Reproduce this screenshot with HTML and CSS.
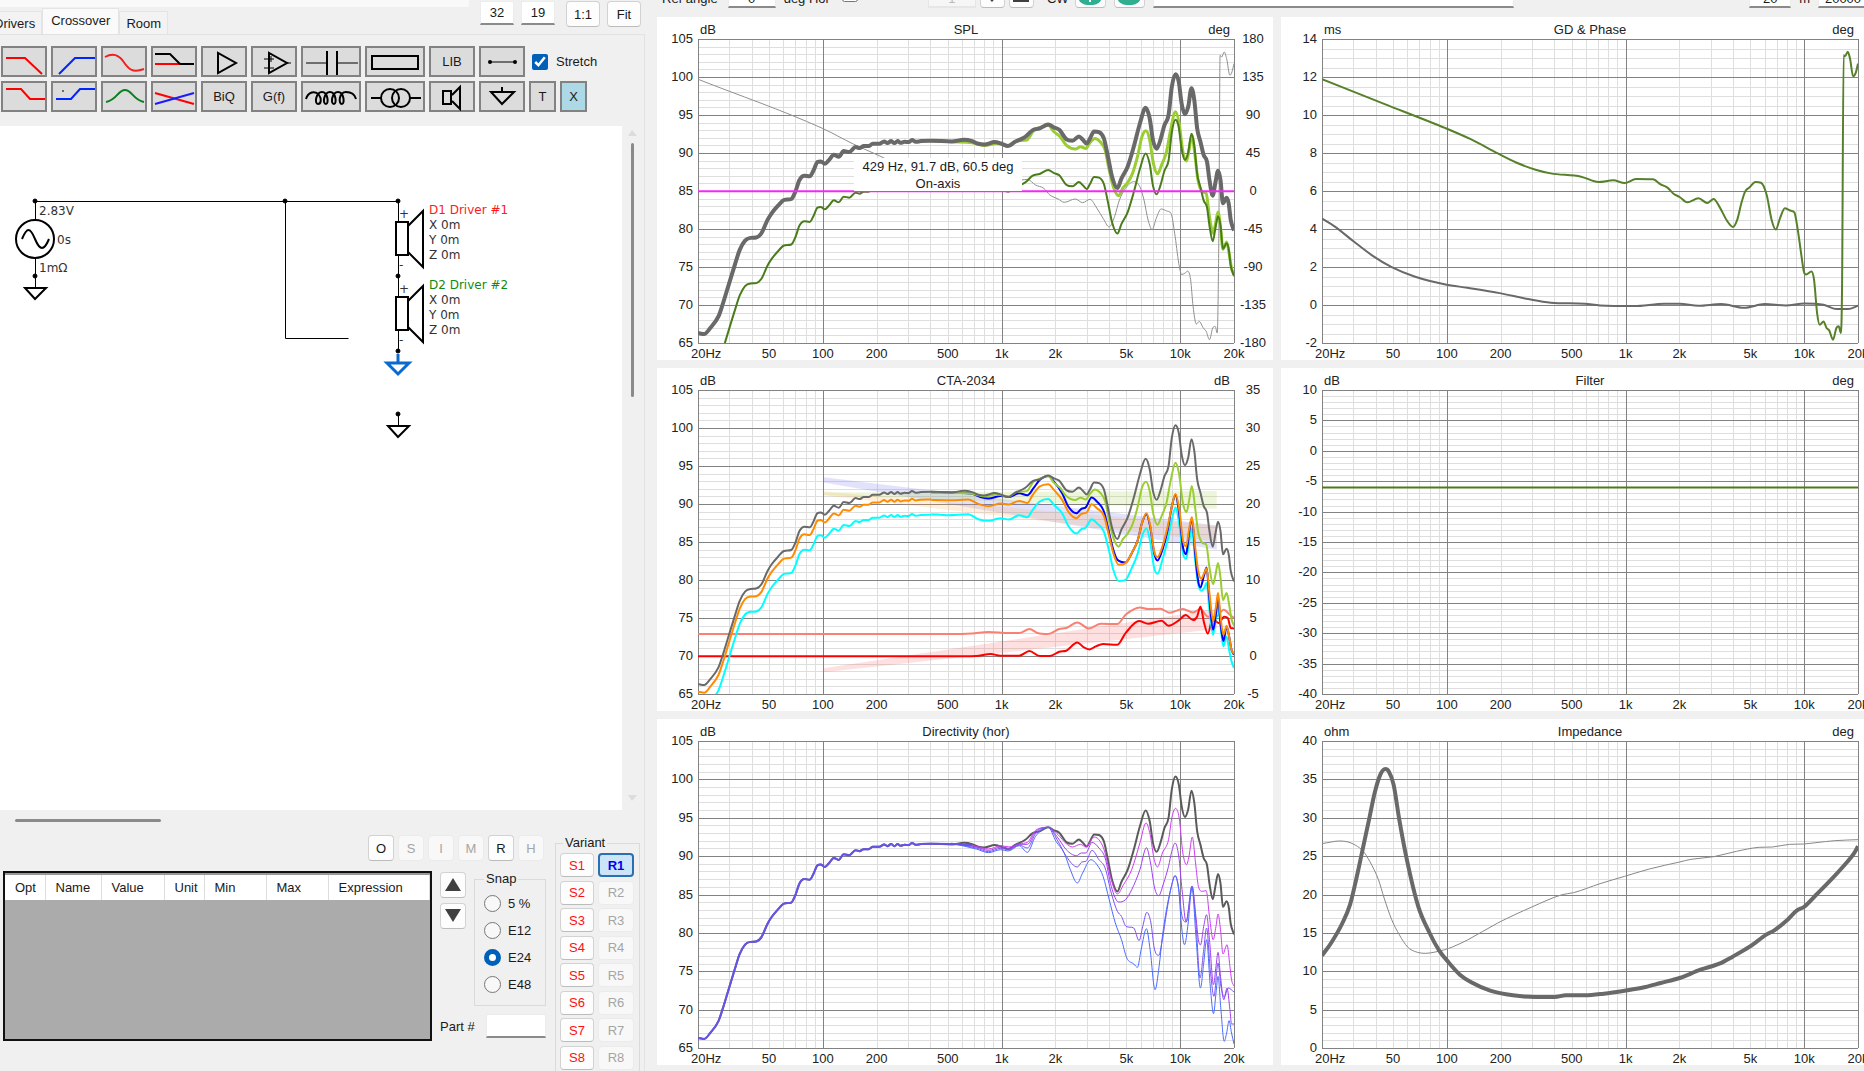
FILE: index.html
```html
<!DOCTYPE html>
<html lang="en">
<head>
  <meta charset="UTF-8">
  <title>Crossover</title>
  <link rel="stylesheet" href="styles.css">
</head>
<body>

  <section class="editor">
    <header class="tabbar">
      <nav class="tabs">
        <a href="#drivers">Drivers</a>
        <a href="#crossover" class="active">Crossover</a>
        <a href="#room">Room</a>
      </nav>
      <div class="size">
        <input type="text" value="32" aria-label="Columns">
        <input type="text" value="19" aria-label="Rows">
        <button class="btn">1:1</button>
        <button class="btn">Fit</button>
      </div>
    </header>

    <div class="tabpage">
      <div class="parts">
        <div class="parts-row">
          <button class="part" aria-label="Low pass"><svg width="42" height="28"><path d="M3 10H22L39 26" stroke="#f00" stroke-width="2"/></svg></button>
          <button class="part" aria-label="High pass"><svg width="42" height="28"><path d="M6 26L22 10H42" stroke="#0026ff" stroke-width="2"/></svg></button>
          <button class="part" aria-label="Shelf"><svg width="42" height="28"><path d="M2 9C9 5 15 6 20 13C26 22 30 25 41 21" stroke="#f02020" stroke-width="2"/></svg></button>
          <button class="part" aria-label="Delay"><svg width="42" height="28"><path d="M2 16H26" stroke="#f00" stroke-width="2"/><path d="M2 6H17L27 16H41" stroke="#000" stroke-width="2"/></svg></button>
          <button class="part" aria-label="Buffer"><svg width="42" height="28"><path d="M15 5V25L33 15Z" stroke="#000" stroke-width="2"/></svg></button>
          <button class="part" aria-label="Op amp"><svg width="42" height="28"><path d="M16 5V25L34 15Z" stroke="#000" stroke-width="2"/><path d="M34 15H38M11 11H21M18 8V14M11 20H21" stroke="#000"/></svg></button>
          <button class="part wide" aria-label="Capacitor"><svg width="56" height="28"><path d="M3 15H24M35 15H55" stroke="#000"/><path d="M24 3V27M34 3V27" stroke="#000" stroke-width="2"/></svg></button>
          <button class="part wide" aria-label="Resistor"><svg width="56" height="28"><rect x="5" y="8" width="46" height="13" stroke="#000" stroke-width="2"/></svg></button>
          <button class="part">LIB</button>
          <button class="part" aria-label="Wire"><svg width="42" height="28"><path d="M8 14H34" stroke="#000"/><circle cx="9" cy="14" r="2" fill="#000"/><circle cx="34" cy="14" r="2" fill="#000"/></svg></button>
          <label class="stretch"><input type="checkbox" checked> Stretch</label>
        </div>
        <div class="parts-row">
          <button class="part" aria-label="Low shelf"><svg width="42" height="28"><path d="M3 6H18L27 16H42" stroke="#f00" stroke-width="2"/></svg></button>
          <button class="part" aria-label="High shelf"><svg width="42" height="28"><path d="M3 16H18L27 6H42" stroke="#0026ff" stroke-width="2"/><circle cx="10" cy="8" r="1" fill="#444"/></svg></button>
          <button class="part" aria-label="Peak"><svg width="42" height="28"><path d="M3 19C14 17 15 7 22 7S30 17 41 19" stroke="#0a7f1e" stroke-width="2"/></svg></button>
          <button class="part" aria-label="All pass"><svg width="42" height="28"><path d="M2 10L41 21" stroke="#f00" stroke-width="2"/><path d="M2 21L41 10" stroke="#1a1aff" stroke-width="2"/></svg></button>
          <button class="part">BiQ</button>
          <button class="part">G(f)</button>
          <button class="part wide" aria-label="Inductor"><svg width="56" height="28"><path d="M3 16C5 9 12 7 16 12C19 16 18 21 15 21C11 21 13 9 19 9C25 9 26 21 23 21C19 21 21 9 27 9C33 9 34 21 31 21C27 21 29 9 35 9C41 9 42 21 39 21C35 21 36 9 43 9C49 9 52 12 53 16" stroke="#000" stroke-width="2"/></svg></button>
          <button class="part wide" aria-label="Transformer"><svg width="56" height="28"><circle cx="23" cy="15" r="9" stroke="#000" stroke-width="2"/><circle cx="34" cy="15" r="9" stroke="#000" stroke-width="2"/><path d="M4 15H14M43 15H54" stroke="#000" stroke-width="2"/></svg></button>
          <button class="part" aria-label="Driver"><svg width="42" height="28"><path d="M12 8H20V21H12ZM21 12L29 4V26L21 18" stroke="#000" stroke-width="2"/></svg></button>
          <button class="part" aria-label="Ground"><svg width="42" height="28"><path d="M21 4V9M10 9H33L21 21Z" stroke="#000" stroke-width="2"/></svg></button>
          <button class="part small">T</button>
          <button class="part small on">X</button>
        </div>
      </div>

      <div class="canvas-area">
        <svg class="schematic" width="600" height="480" viewBox="0 0 600 480">
          <g class="wire">
            <path d="M35.500 75.500H398.500V96M285.500 75.500V212.500H348.500M35.500 75V93M35.500 132V162M398.500 129V171M398.500 204V226M398.500 288V300"/>
          </g>
          <g class="dots">
            <circle cx="35" cy="75" r="2"/><circle cx="285" cy="75" r="2"/><circle cx="398" cy="75" r="2"/>
            <circle cx="35" cy="150" r="2"/><circle cx="398" cy="150" r="2"/><circle cx="398" cy="225" r="2"/><circle cx="398" cy="288" r="2"/>
          </g>
          <g class="symbol">
            <circle cx="35" cy="113" r="19"/>
            <path d="M22 113C27 101 30 101 35 113S44 125 49 113"/>
            <path d="M25 162H46L35 173Z"/>
            <path d="M396 96H408V129H396ZM408 100L423 85V141L408 126"/>
            <path d="M396 171H408V204H396ZM408 175L423 160V216L408 201"/>
            <path d="M388 300H409L398 311Z"/>
          </g>
          <path class="selected" d="M398 228V237M387 237H409L398 248Z"/>
          <text x="39" y="89">2.83V</text>
          <text x="57" y="118">0s</text>
          <text x="39" y="146">1mΩ</text>
          <text x="399" y="92">+</text>
          <text x="399" y="143">-</text>
          <text x="399" y="167">+</text>
          <text x="399" y="218">-</text>
          <text x="429" y="88" class="d1">D1 Driver #1</text>
          <text x="429" y="103">X 0m</text>
          <text x="429" y="118">Y 0m</text>
          <text x="429" y="133">Z 0m</text>
          <text x="429" y="163" class="d2">D2 Driver #2</text>
          <text x="429" y="178">X 0m</text>
          <text x="429" y="193">Y 0m</text>
          <text x="429" y="208">Z 0m</text>
        </svg>
        <div class="vscroll">
          <svg width="9" height="6"><path d="M4 0L9 6H0Z"/></svg>
          <div class="vthumb"></div>
          <svg width="9" height="6"><path d="M4 6L9 0H0Z"/></svg>
        </div>
      </div>
      <div class="hscroll"></div>

      <div class="bottom">
        <div class="params">
          <div class="opt-buttons">
            <button class="btn">O</button>
            <button class="btn" disabled>S</button>
            <button class="btn" disabled>I</button>
            <button class="btn" disabled>M</button>
            <button class="btn">R</button>
            <button class="btn" disabled>H</button>
          </div>
          <div class="params-body">
            <div class="grid-box">
              <table>
                <colgroup><col class="c-opt"><col class="c-name"><col class="c-value"><col class="c-unit"><col class="c-min"><col class="c-max"><col></colgroup>
                <thead>
                  <tr><th>Opt</th><th>Name</th><th>Value</th><th>Unit</th><th>Min</th><th>Max</th><th>Expression</th></tr>
                </thead>
              </table>
            </div>
            <div class="tools">
              <div class="tools-top">
                <div class="updown">
                  <button class="btn" aria-label="Up"><svg width="16" height="14"><path d="M8 0L16 13H0Z" fill="#404040"/></svg></button>
                  <button class="btn" aria-label="Down"><svg width="16" height="14"><path d="M0 0H16L8 13Z" fill="#404040"/></svg></button>
                </div>
                <fieldset class="snap">
                  <legend>Snap</legend>
                  <label><input type="radio" name="snap"> 5 %</label>
                  <label><input type="radio" name="snap"> E12</label>
                  <label><input type="radio" name="snap" checked> E24</label>
                  <label><input type="radio" name="snap"> E48</label>
                </fieldset>
              </div>
              <label class="partno">Part # <input type="text"></label>
            </div>
          </div>
        </div>
        <fieldset class="variant">
          <legend>Variant</legend>
          <div class="variants">
            <button class="btn save">S1</button><button class="btn current">R1</button>
            <button class="btn save">S2</button><button class="btn" disabled>R2</button>
            <button class="btn save">S3</button><button class="btn" disabled>R3</button>
            <button class="btn save">S4</button><button class="btn" disabled>R4</button>
            <button class="btn save">S5</button><button class="btn" disabled>R5</button>
            <button class="btn save">S6</button><button class="btn" disabled>R6</button>
            <button class="btn save">S7</button><button class="btn" disabled>R7</button>
            <button class="btn save">S8</button><button class="btn" disabled>R8</button>
          </div>
        </fieldset>
      </div>
    </div>
  </section>

  <section class="results">
    <div class="options">
      <label class="angle">Ref angle <input type="text" value="0"></label>
      <label class="hor">deg Hor <input type="checkbox"></label>
      <div class="spin">
        <input type="text" value="1" aria-label="Curve" disabled>
        <button class="btn" aria-label="Next"><svg width="16" height="14"><path d="M8 14L0 5H4V0H12V5H16Z" fill="#404040"/></svg></button>
        <button class="btn" aria-label="Previous"><svg width="16" height="14"><path d="M8 0L16 9V14H0V9Z" fill="#404040"/></svg></button>
      </div>
      <span class="cw">CW</span>
      <button class="btn round" aria-label="Add"><svg width="24" height="20"><rect width="24" height="20" rx="9" fill="#2fae90"/><path d="M12 6V17" stroke="#fff" stroke-width="2"/></svg></button>
      <button class="btn round" aria-label="Remove"><svg width="24" height="20"><rect width="24" height="20" rx="9" fill="#2fae90"/></svg></button>
      <input type="text" class="title" aria-label="Title">
      <div class="range">
        <input type="text" value="20" aria-label="Minimum frequency">
        <span>m</span>
        <input type="text" class="fmax" value="20000" aria-label="Maximum frequency">
      </div>
    </div>
    <div class="charts">
      <div class="chart" id="spl"><div class="tip">429 Hz, 91.7 dB, 60.5 deg<br>On-axis</div></div>
      <div class="chart" id="gd"></div>
      <div class="chart" id="cta"></div>
      <div class="chart" id="filter"></div>
      <div class="chart" id="directivity"></div>
      <div class="chart" id="impedance"></div>
    </div>
  </section>

  <script src="charts.js"></script>
</body>
</html>
```
FILE: styles.css
```css
* {
  box-sizing: border-box;
}
body {
  margin: 0;
  display: flex;
  height: 100vh;
  overflow: hidden;
  background: #f0f0f0;
  color: #1a1a1a;
  font-family: "Liberation Sans", Arial, sans-serif;
  font-size: 13px;
}
button, input {
  font: inherit;
  color: inherit;
}
svg {
  display: block;
  fill: none;
}
input[type="text"] {
  height: 24px;
  border: 1px solid #ececec;
  border-bottom: 2px solid #8a8a8a;
  background: #fff;
  text-align: center;
  padding: 0;
}
.btn {
  height: 26px;
  padding: 0;
  border: 1px solid #d2d2d2;
  border-bottom-color: #bcbcbc;
  border-radius: 4px;
  background: #fdfdfd;
  display: flex;
  align-items: center;
  justify-content: center;
}
.btn:disabled {
  color: #a5a5a5;
  border-color: #ebebeb;
  background: #f8f8f8;
}

/* left side */
.editor {
  width: 645px;
  margin-right: 12px;
  flex: none;
  display: flex;
  flex-direction: column;
}
.tabbar {
  display: flex;
  justify-content: space-between;
  height: 34px;
  padding-right: 4px;
}
.tabs {
  display: flex;
  align-items: flex-end;
  margin-left: -13px;
  flex: 1;
  max-width: 482px;
  height: 34px;
  border-top: 7px solid #f9f9f9;
}
.tabs a {
  color: inherit;
  text-decoration: none;
  height: 23px;
  line-height: 23px;
  padding: 0 6px;
  background: #f3f3f3;
  border: 1px solid #e4e4e4;
  border-bottom: 0;
}
.tabs .active {
  height: 26px;
  background: #fafafa;
  padding: 0 8px;
}
.size {
  display: flex;
  gap: 7px;
  padding-top: 1px;
}
.size input {
  width: 34px;
}
.size .btn {
  width: 34px;
}
.size .btn:nth-of-type(1) {
  margin-left: 4px;
}
.tabpage {
  flex: 1;
  min-height: 0;
  display: flex;
  flex-direction: column;
  border-top: 1px solid #e2e2e2;
  border-right: 1px solid #e2e2e2;
}
.parts {
  display: flex;
  flex-direction: column;
  gap: 4px;
  padding: 11px 0 14px 1px;
}
.parts-row {
  display: flex;
  gap: 4px;
}
.part {
  width: 46px;
  height: 31px;
  padding: 0;
  border: 2px solid #828282;
  background: #dcdcdc;
  display: flex;
  align-items: center;
  justify-content: center;
}
.part.wide {
  width: 60px;
}
.part.small {
  width: 27px;
}
.part.on {
  background: #add8e6;
}
.stretch {
  display: flex;
  align-items: center;
  gap: 8px;
  margin-left: 3px;
}
.stretch input {
  width: 16px;
  height: 16px;
  margin: 0;
  accent-color: #005fb8;
}

.canvas-area {
  flex: 1;
  min-height: 0;
  background: #fff;
  margin-right: 22px;
  position: relative;
}
.schematic text {
  font-family: "DejaVu Sans", Verdana, sans-serif;
  font-size: 12px;
  fill: #333;
}
.schematic .d1 {
  fill: #ff1a1a;
}
.schematic .d2 {
  fill: #108a10;
}
.wire {
  stroke: #000;
}
.dots {
  fill: #000;
  stroke: #000;
}
.symbol {
  stroke: #000;
  stroke-width: 2;
}
.selected {
  stroke: #0a6ad0;
  stroke-width: 3;
}
.vscroll {
  position: absolute;
  right: -15px;
  top: 4px;
  bottom: 9px;
  display: flex;
  flex-direction: column;
  align-items: center;
  gap: 7px;
}
.vscroll svg {
  flex: none;
  fill: #dcdcdc;
}
.vscroll svg:last-child {
  margin-top: auto;
}
.vthumb {
  width: 3px;
  height: 254px;
  border-radius: 2px;
  background: #8a8a8a;
}
.hscroll {
  width: 146px;
  height: 3px;
  border-radius: 2px;
  margin: 9px 0 13px 15px;
  background: #8a8a8a;
}

.bottom {
  display: flex;
  justify-content: space-between;
  height: 236px;
  padding: 0 4px 0 3px;
}
.params {
  width: 543px;
}
.opt-buttons {
  display: flex;
  justify-content: flex-end;
  gap: 4px;
  padding-right: 2px;
}
.opt-buttons .btn {
  width: 26px;
}
.params-body {
  display: flex;
  gap: 8px;
  padding-top: 10px;
}
.grid-box {
  flex: 1;
  height: 170px;
  border: 2px solid #111;
  background: #ababab;
}
.grid-box table {
  width: 100%;
  table-layout: fixed;
  border-collapse: collapse;
  border-top: 2px solid #999;
}
.grid-box th {
  height: 26px;
  padding: 0 0 0 10px;
  text-align: left;
  font-weight: normal;
  background: #fff;
  border-right: 1px solid #ddd;
}
.c-opt { width: 40px; }
.c-name { width: 56px; }
.c-value { width: 63px; }
.c-unit { width: 40px; }
.c-min { width: 62px; }
.c-max { width: 62px; }
.tools {
  width: 106px;
  display: flex;
  flex-direction: column;
  gap: 8px;
}
.tools-top {
  display: flex;
  gap: 8px;
}
.updown {
  display: flex;
  flex-direction: column;
  gap: 5px;
  padding-top: 1px;
}
.updown .btn {
  width: 26px;
}
fieldset {
  margin: 0;
  border: 1px solid #dadada;
}
legend {
  padding: 0 2px;
  line-height: 16px;
}
.snap {
  flex: 1;
  height: 135px;
  padding: 8px 0 0 9px;
  display: flex;
  flex-direction: column;
  gap: 10px;
}
.snap label {
  display: flex;
  align-items: center;
  gap: 7px;
  height: 17px;
}
.snap input {
  appearance: none;
  width: 17px;
  height: 17px;
  margin: 0;
  border: 1px solid #777;
  border-radius: 50%;
  background: #f8f8f8;
}
.snap input:checked {
  border: 5px solid #005fb8;
  background: #fff;
}
.partno {
  display: flex;
  align-items: center;
  justify-content: space-between;
}
.partno input {
  width: 60px;
}
.variant {
  width: 85px;
  height: 250px;
  padding: 2px 5px 0 4px;
}
.variant legend {
  margin-left: 3px;
}
.variants {
  display: grid;
  grid-template-columns: 34px 36px;
  column-gap: 4px;
  align-content: space-between;
  height: 217px;
}
.variants .btn {
  height: 24px;
}
.save {
  color: #ff1010;
}
.current {
  color: #0000f0;
  font-weight: bold;
  background: #cce4f7;
  border: 2px solid #2a70b0;
}

/* right side */
.results {
  flex: 1;
  min-width: 0;
  display: flex;
  flex-direction: column;
}
.options {
  display: flex;
  align-items: flex-end;
  height: 24px;
  margin-top: -16px;
  margin-bottom: 9px;
  padding-left: 5px;
  line-height: 18px;
  white-space: nowrap;
}
.options label {
  display: flex;
  align-items: flex-end;
}
.options input[type="text"] {
  padding-top: 6px;
}
.angle input {
  width: 48px;
  margin-left: 10px;
}
.hor {
  margin-left: 8px;
}
.hor input {
  width: 16px;
  height: 16px;
  margin: 0 0 6px 12px;
}
.spin {
  display: flex;
  align-items: flex-end;
  gap: 4px;
  margin-left: 70px;
}
.spin input {
  width: 48px;
}
.spin input:disabled {
  color: #bbb;
  background: #f6f6f6;
  border-color: #e6e6e6;
}
.spin .btn {
  width: 25px;
}
.cw {
  width: 28px;
  margin-left: 13px;
}
.round {
  width: 31px;
  margin-right: 8px;
}
.title {
  width: 361px;
}
.range {
  margin-left: auto;
  margin-right: -4px;
  display: flex;
  align-items: flex-end;
  gap: 8px;
}
.range input {
  width: 42px;
}
.range .fmax {
  width: 50px;
}
.charts {
  flex: 1;
  min-height: 0;
  display: grid;
  grid-template-columns: 1fr 1fr;
  grid-template-rows: 343fr 343fr 346fr;
  gap: 8px;
  /* last axis labels run past the window edge */
  margin-right: -32px;
  margin-bottom: 6px;
}
.chart {
  position: relative;
  min-width: 0;
  min-height: 0;
  background: #fff;
  overflow: hidden;
}
.chart svg {
  position: absolute;
  width: 100%;
  height: 100%;
}
.chart text {
  fill: #222;
}
.chart .minor {
  stroke: #dedede;
}
.chart .major {
  stroke: #828282;
}
.chart .trace {
  stroke-linejoin: round;
}
.tip {
  position: absolute;
  z-index: 1;
  left: 32%;
  top: 41%;
  width: 168px;
  height: 33px;
  line-height: 17px;
  text-align: center;
  background: #fff;
}
```
FILE: charts.js
```js
// frames in which the trace points below were taken: left, top, right, bottom
var SPL = [120, 116, 1430, 1030];
var CTA = [120, 90, 1430, 1003];
var DIR = [120, 94, 1430, 1015];
var GD = [136, 116, 1551, 1030];
var IMP = [136, 94, 1551, 1015];

var low = "120,1000 135,1003 150,985 170,950 180,915 195,855 210,795 222,750 235,722 248,714 262,713 275,700 290,660 300,640 315,618 330,600 348,597 358,575 368,540 380,527 393,529 402,512 412,486 420,484 430,491 440,480 452,464 464,470 476,453 490,456 505,441 515,444 525,438 537,438 547,431 563,431 575,424 583,429 592,423 600,429 608,423 615,428 625,425 635,426 643,420 652,425 665,423 690,422 ";
var onAxis = low + "740,424 770,419 790,423 805,431 820,433 845,426 860,430 878,438 895,425 920,410 938,390 955,385 976,373 990,382 1003,389 1020,417 1035,422 1051,409 1060,418 1070,430 1078,415 1088,394 1100,396 1112,415 1122,470 1132,530 1145,564 1155,535 1170,500 1185,440 1200,370 1214,323 1224,355 1232,420 1241,446 1250,420 1260,375 1270,345 1278,260 1287,222 1295,245 1302,310 1310,342 1318,320 1326,264 1333,300 1340,385 1348,425 1356,465 1364,485 1370,540 1378,587 1385,545 1391,512 1397,540 1403,610 1412,593 1417,610 1422,660 1430,692";
var listening = "690,422 740,425 790,428 820,436 850,430 878,436 900,422 923,420 940,392 960,380 976,375 990,395 1005,410 1020,435 1042,447 1055,440 1068,445 1078,428 1090,415 1103,425 1115,450 1125,510 1135,560 1148,587 1158,565 1170,548 1182,520 1195,465 1205,410 1215,392 1224,420 1233,490 1243,521 1253,495 1265,455 1275,390 1287,335 1296,370 1305,455 1314,483 1320,450 1327,405 1335,470 1342,540 1352,575 1362,580 1370,650 1379,700 1385,670 1391,636 1397,680 1403,748 1412,726 1418,760 1424,805 1430,825";

var charts = {
  spl: {
    title: "SPL", unit: "dB", unit2: "deg",
    y: [105, 65, 5], div: 5, y2: [180, -45],
    traces: [
      { c: "#909090", w: 1, f: SPL, p: "120,237 423,384 500,432 565,468 700,545 860,548 910,540 925,538 945,555 965,565 980,585 1000,597 1015,607 1042,597 1060,608 1078,598 1095,625 1110,655 1125,681 1138,650 1150,600 1165,565 1185,545 1200,560 1210,600 1220,660 1230,689 1240,655 1252,627 1265,633 1276,640 1285,700 1295,790 1302,824 1310,820 1317,814 1324,840 1330,920 1338,973 1345,965 1355,985 1362,995 1370,1020 1378,985 1384,980 1389,1000 1393,700 1396,165 1400,170 1406,155 1412,175 1420,225 1425,215 1430,190" },
      { c: "#9acd32", w: 3, f: SPL, p: listening },
      { c: "#4a7c1c", w: 2, f: SPL, dy: 137, p: onAxis },
      { c: "#696969", w: 4, f: SPL, p: onAxis },
      { c: "#f428f4", w: 2, f: SPL, p: "120,574 1430,574" }
    ]
  },
  gd: {
    title: "GD & Phase", unit: "ms", unit2: "deg",
    y: [14, -2, 2], div: 4,
    traces: [
      { c: "#696969", w: 2, f: GD, p: "136,656 170,680 220,725 270,768 320,802 380,830 462,854 520,864 605,880 680,898 740,909 830,912 870,917 960,919 1040,912 1080,912 1130,918 1190,913 1250,924 1305,913 1360,917 1410,911 1460,915 1495,928 1525,928 1551,918" },
      { c: "#57802a", w: 2, f: GD, p: "136,237 300,311 462,384 530,418 600,460 650,488 700,509 740,520 820,530 866,546 905,541 935,549 965,537 1010,538 1030,553 1048,563 1065,582 1080,591 1100,607 1130,595 1153,609 1170,597 1185,620 1205,662 1221,681 1232,660 1243,610 1253,575 1265,562 1280,546 1295,548 1310,585 1323,660 1334,689 1345,655 1358,625 1370,631 1383,637 1392,690 1402,770 1408,815 1414,824 1428,815 1435,840 1443,940 1450,975 1460,965 1468,985 1475,992 1485,1020 1494,985 1500,980 1506,1000 1509,850 1513,165 1517,168 1524,154 1530,175 1538,228 1545,218 1551,190" }
    ]
  },
  cta: {
    title: "CTA-2034", unit: "dB", unit2: "dB",
    y: [105, 65, 5], div: 5, y2: [35, -5],
    bands: [
      { c: "rgba(110,110,240,.2)", p: "427,352 1388,497 1388,570 427,368" },
      { c: "rgba(255,165,60,.18)", p: "427,395 1388,497 1388,545 427,406" },
      { c: "rgba(154,205,50,.18)", p: "427,398 1388,393 1388,447 427,406" },
      { c: "rgba(250,100,100,.2)", p: "427,926 1388,748 1388,808 427,938" }
    ],
    traces: [
      { c: "#fa8072", w: 2, f: CTA, p: "120,823 740,823 790,821 830,817 880,820 905,820 930,808 950,820 975,823 1003,808 1020,805 1047,788 1075,806 1105,792 1145,793 1165,765 1200,743 1220,748 1250,747 1272,759 1305,748 1330,758 1348,748 1365,770 1385,772 1405,750 1420,765 1430,775" },
      { c: "#ff0000", w: 2, f: CTA, p: "120,890 730,890 800,889 835,883 860,888 905,888 930,874 955,889 980,889 1003,876 1020,873 1047,848 1062,862 1077,869 1092,860 1110,853 1145,855 1165,820 1198,784 1220,792 1253,783 1270,798 1295,782 1312,766 1330,781 1340,770 1348,741 1357,790 1366,822 1378,775 1392,790 1406,771 1415,775 1422,805 1430,806" },
      { c: "#00ffff", w: 2, f: SPL, dy: 69, p: low },
      { c: "#00ffff", w: 2, f: CTA, p: "690,463 730,466 780,463 805,478 830,483 860,475 880,479 905,466 925,472 938,450 955,425 976,417 990,435 1010,460 1025,498 1045,521 1057,508 1068,503 1082,478 1095,490 1112,515 1125,575 1135,630 1148,664 1165,660 1180,625 1195,580 1205,530 1216,506 1225,545 1235,625 1243,642 1255,600 1268,540 1278,480 1287,443 1297,500 1305,580 1313,597 1320,550 1327,505 1335,600 1342,670 1350,693 1357,685 1363,670 1370,750 1379,825 1386,770 1391,740 1397,800 1404,860 1412,830 1418,870 1424,905 1430,925" },
      { c: "#0000ff", w: 2, f: CTA, p: "690,397 750,398 790,402 815,413 830,416 860,408 880,411 905,400 925,406 940,385 955,360 976,348 990,365 1010,400 1025,440 1045,460 1057,447 1068,442 1082,413 1095,425 1112,455 1125,520 1135,570 1145,600 1165,608 1180,580 1195,540 1205,490 1216,463 1225,500 1235,580 1243,602 1255,570 1268,510 1278,440 1287,405 1297,470 1305,560 1313,583 1320,520 1327,475 1335,580 1342,660 1348,683 1356,650 1363,623 1370,720 1379,810 1386,760 1391,710 1397,790 1404,844 1412,800 1418,830 1424,870 1430,885" },
      { c: "#ff8c00", w: 2, f: SPL, dy: 23, p: low },
      { c: "#ff8c00", w: 2, f: CTA, p: "690,420 740,421 780,419 805,432 830,439 860,431 880,434 905,423 925,429 938,405 955,380 976,373 990,390 1010,420 1025,455 1045,475 1057,462 1070,458 1082,433 1095,445 1112,468 1125,530 1135,580 1148,615 1165,610 1180,580 1195,540 1205,490 1216,460 1225,495 1235,575 1243,592 1255,560 1268,500 1278,440 1287,402 1297,455 1305,540 1313,559 1320,510 1327,472 1335,560 1342,630 1350,657 1357,640 1363,625 1370,700 1379,785 1386,740 1391,700 1397,770 1404,825 1412,798 1418,830 1424,870 1430,883" },
      { c: "#9acd32", w: 2, f: SPL, p: listening },
      { c: "#696969", w: 2, f: SPL, p: onAxis }
    ]
  },
  filter: {
    title: "Filter", unit: "dB", unit2: "deg",
    y: [10, -40, 5], div: 5,
    traces: [
      { c: "#4f7a1c", w: 2, f: [136, 90, 1551, 1003], p: "136,383 1551,383" }
    ]
  },
  directivity: {
    title: "Directivity (hor)", unit: "dB",
    y: [105, 65, 5], div: 5,
    traces: [
      { c: "#5a5a5a", w: 2, f: SPL, p: onAxis },
      { c: "#cf3cf0", w: 1, f: DIR, p: "740,401 800,410 830,418 860,408 880,412 905,402 925,398 945,362 976,353 1000,375 1020,402 1035,412 1055,404 1068,412 1088,382 1103,395 1115,430 1128,500 1145,553 1160,525 1180,480 1200,400 1215,340 1225,375 1235,450 1243,472 1255,430 1270,390 1278,325 1287,296 1296,325 1305,430 1314,465 1320,440 1328,382 1336,460 1343,530 1352,545 1362,543 1370,620 1379,690 1386,650 1391,613 1397,660 1403,733 1413,705 1420,770 1424,810 1430,830" },
      { c: "#a040f0", w: 1, f: DIR, p: "740,401 800,412 830,422 860,412 880,416 905,404 925,404 945,366 976,353 1000,385 1020,420 1045,438 1057,430 1068,430 1083,398 1100,415 1115,445 1130,530 1148,577 1165,570 1180,540 1200,480 1216,414 1226,460 1236,535 1246,558 1258,520 1270,470 1278,425 1286,400 1295,440 1303,540 1313,637 1320,590 1328,530 1336,610 1343,690 1348,706 1356,650 1363,615 1370,690 1380,825 1386,770 1391,728 1397,800 1405,870 1413,835 1420,900 1424,943 1430,943" },
      { c: "#8050f8", w: 1, f: DIR, p: "740,401 800,415 830,426 860,416 880,420 905,406 925,415 945,372 976,353 1000,395 1020,440 1047,472 1058,457 1068,455 1083,422 1100,450 1115,475 1130,550 1145,605 1155,620 1166,650 1185,655 1198,693 1207,650 1217,608 1227,640 1235,715 1246,737 1255,690 1265,610 1277,530 1286,498 1295,540 1303,620 1313,637 1327,530 1337,640 1347,805 1356,720 1363,655 1372,780 1381,860 1391,760 1398,830 1406,862 1416,835 1430,847" },
      { c: "#4a6cff", w: 1, f: DIR, p: "740,401 800,418 830,429 860,420 878,424 905,408 925,428 945,380 976,353 995,395 1015,430 1030,480 1047,520 1060,490 1080,450 1095,465 1110,500 1125,570 1140,640 1155,690 1168,745 1185,763 1194,773 1203,720 1216,657 1225,720 1237,840 1247,770 1255,680 1265,600 1277,530 1286,498 1295,540 1301,640 1309,705 1318,640 1327,530 1337,680 1348,835 1356,760 1363,690 1372,830 1380,912 1386,850 1391,800 1398,900 1406,995 1412,970 1418,933 1424,970 1430,1003" },
      { c: "#6454ea", w: 2, f: SPL, p: low + "740,423 790,426" }
    ]
  },
  impedance: {
    title: "Impedance", unit: "ohm", unit2: "deg",
    y: [40, 0, 5], div: 5,
    traces: [
      { c: "#888888", w: 1, f: IMP, p: "136,402 160,397 180,394 205,397 225,407 245,425 262,455 285,510 300,565 320,630 340,675 362,712 380,725 410,731 435,727 460,720 480,712 520,691 600,640 690,592 770,555 800,549 870,522 935,500 1000,478 1080,457 1110,449 1170,441 1230,425 1290,413 1325,412 1370,404 1408,403 1440,399 1490,393 1551,390" },
      { c: "#696969", w: 4, f: IMP, p: "136,738 160,700 190,640 210,585 230,490 245,410 262,320 275,250 290,195 303,178 312,185 325,225 340,330 360,450 390,590 420,670 445,722 470,758 500,795 530,818 580,843 640,857 700,862 750,862 780,857 830,857 880,852 935,843 990,832 1030,820 1080,805 1135,780 1185,762 1220,741 1265,711 1310,674 1330,662 1365,630 1390,602 1408,592 1440,556 1480,510 1520,460 1540,432 1551,410" }
    ]
  }
};

var freqLabels = { 50: "50", 100: "100", 200: "200", 500: "500", 1000: "1k", 2000: "2k", 5000: "5k", 10000: "10k", 20000: "20k" };

function draw(id) {
  var c = charts[id];
  var el = document.getElementById(id);
  var L = 41, T = 22;
  var W = el.clientWidth - L - 39;
  var H = el.clientHeight - T - 17;

  function fx(f) { return L + W * Math.log10(f / 20) / 3; }
  function line(cls, x1, y1, x2, y2) {
    return '<path class="' + cls + '" shape-rendering="crispEdges" d="M' + x1 + ' ' + y1 + 'L' + x2 + ' ' + y2 + '"/>';
  }
  function text(x, y, s, anchor) {
    return '<text x="' + x + '" y="' + y + '" text-anchor="' + anchor + '">' + s.replace("&", "&amp;") + '</text>';
  }
  function points(p, f, dy) {
    return p.trim().split(" ").map(function (s) {
      var a = s.split(",");
      return [L + W * (a[0] - f[0]) / (f[2] - f[0]), T + H * (+a[1] + (dy || 0) - f[1]) / (f[3] - f[1])];
    });
  }
  // flat tangent at peaks, limited average slope elsewhere, so nothing overshoots
  function smooth(p) {
    var m = p.map(function (q, i) {
      if (i === 0 || i === p.length - 1) return null;
      var a = (q[1] - p[i - 1][1]) / (q[0] - p[i - 1][0]);
      var b = (p[i + 1][1] - q[1]) / (p[i + 1][0] - q[0]);
      if (a * b <= 0) return 0;
      var lim = 3 * Math.min(Math.abs(a), Math.abs(b));
      return Math.max(-lim, Math.min(lim, (a + b) / 2));
    });
    var d = "M" + p[0];
    for (var i = 1; i < p.length; i++) {
      var h = p[i][0] - p[i - 1][0];
      var s = (p[i][1] - p[i - 1][1]) / h;
      var m0 = m[i - 1] === null ? s : m[i - 1];
      var m1 = m[i] === null ? s : m[i];
      d += "C" + [p[i - 1][0] + h / 3, p[i - 1][1] + m0 * h / 3, p[i][0] - h / 3, p[i][1] - m1 * h / 3, p[i][0], p[i][1]].join(" ");
    }
    return d;
  }

  var out = "", major = "", labels = "";
  for (var dec = 10; dec <= 10000; dec *= 10) {
    for (var k = 1; k < 10; k++) {
      var f = dec * k;
      if (f <= 20 || f >= 20000) continue;
      var x = Math.round(fx(f)) + 0.5;
      if (k === 1) major += line("major", x, T, x, T + H);
      else out += line("minor", x, T, x, T + H);
    }
  }
  var steps = (c.y[0] - c.y[1]) / c.y[2];
  for (var i = 0; i <= steps; i++) {
    var y = T + H * i / steps;
    major += line("major", L, Math.round(y) + 0.5, L + W, Math.round(y) + 0.5);
    labels += text(L - 5, y + 4, String(c.y[0] - i * c.y[2]), "end");
    if (c.y2) labels += text(L + W + 19, y + 4, String(c.y2[0] + i * c.y2[1]), "middle");
    for (var j = 1; j < c.div && i < steps; j++) {
      var ym = Math.round(T + H * (i + j / c.div) / steps) + 0.5;
      out += line("minor", L, ym, L + W, ym);
    }
  }
  major += line("major", L + 0.5, T, L + 0.5, T + H) + line("major", L + W + 0.5, T, L + W + 0.5, T + H);
  for (var n in freqLabels) labels += text(fx(n), T + H + 15, freqLabels[n], "middle");
  labels += text(L - 7, T + H + 15, "20Hz", "start");
  labels += text(L + 2, T - 5, c.unit, "start");
  labels += text(L + W / 2, T - 5, c.title, "middle");
  if (c.unit2) labels += text(L + W - 4, T - 5, c.unit2, "end");

  var curves = "";
  (c.bands || []).forEach(function (b) {
    curves += '<polygon fill="' + b.c + '" points="' + points(b.p, CTA).join(" ") + '"/>';
  });
  c.traces.forEach(function (t) {
    curves += '<path class="trace" stroke="' + t.c + '" stroke-width="' + t.w + '" d="' + smooth(points(t.p, t.f, t.dy)) + '"/>';
  });

  var old = el.querySelector("svg");
  if (old) old.remove();
  el.insertAdjacentHTML("beforeend",
    '<svg><clipPath id="clip-' + id + '"><rect x="' + L + '" y="' + T + '" width="' + W + '" height="' + H + '"/></clipPath>' +
    out + major + '<g clip-path="url(#clip-' + id + ')">' + curves + '</g>' + labels + '</svg>');
}

function drawAll() {
  Object.keys(charts).forEach(draw);
}

window.onresize = drawAll;
drawAll();
```
